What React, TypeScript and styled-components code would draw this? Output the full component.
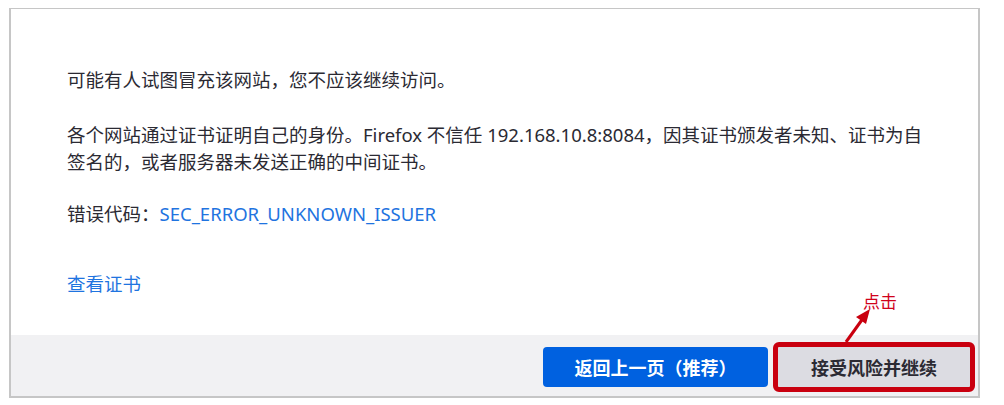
import React from "react";
import styled, { createGlobalStyle } from "styled-components";

const Global = createGlobalStyle`
  html, body { margin: 0; padding: 0; background: #ffffff; }
  body { font-family: "Noto Sans", "Noto Sans CJK SC", sans-serif; }
`;

const Page = styled.div`
  width: 1004px;
  height: 405px;
  padding: 8px 0 0 9px;
  box-sizing: border-box;
`;

const Frame = styled.div`
  width: 971px;
  height: 390px;
  box-sizing: border-box;
  border: 2px solid #c6c6c6;
  border-top-width: 1px;
  display: flex;
  flex-direction: column;
  background: #ffffff;
`;

const Body = styled.div`
  flex: 1;
  padding: 57px 40px 0 56px;
  color: #2b2a33;
  font-size: 18.5px;
  line-height: 27px;
`;

const Para = styled.p<{ $gap: number }>`
  margin: 0 0 ${(p) => p.$gap}px 0;
`;

const Link = styled.a`
  color: #1f74e0;
  text-decoration: none;
`;

const Footer = styled.div`
  height: 61px;
  background: #f1f1f3;
  display: flex;
  justify-content: flex-end;
  align-items: flex-start;
  gap: 10px;
  padding: 12px 8px 0 0;
  box-sizing: border-box;
`;

const Button = styled.button<{ $primary?: boolean }>`
  height: 40px;
  border: none;
  border-radius: 4px;
  font-family: "Noto Sans CJK SC", "Noto Sans", sans-serif;
  font-weight: 700;
  font-size: 18px;
  padding: 0;
  background: ${(p) => (p.$primary ? "#0061e0" : "#dcdce2")};
  color: ${(p) => (p.$primary ? "#ffffff" : "#2b2a33")};
  width: ${(p) => (p.$primary ? "225px" : "192px")};
`;

const Highlight = styled.div`
  position: relative;
  display: flex;
`;

const Accept = styled(Button)`
  outline: 5px solid #c9000f;
  outline-offset: 0;
  border-radius: 1px;
`;

const Note = styled.div`
  position: absolute;
  left: 54px;
  top: -73px;
  width: 90px;
  height: 70px;
  pointer-events: none;
`;

const NoteText = styled.span`
  position: absolute;
  left: 31px;
  top: 14px;
  color: #d0021b;
  font-family: "Noto Sans CJK SC", sans-serif;
  font-size: 17px;
  line-height: 26px;
`;

const Arrow = styled.svg`
  position: absolute;
  left: 0;
  top: 0;
`;

export default function App() {
  return (
    <>
      <Global />
      <Page>
        <Frame>
          <Body>
            <Para $gap={28}>可能有人试图冒充该网站，您不应该继续访问。</Para>
            <Para $gap={25}>
              各个网站通过证书证明自己的身份。Firefox 不信任 192.168.10.8:8084，因其证书颁发者未知、证书为自签名的，或者服务器未发送正确的中间证书。
            </Para>
            <Para $gap={43}>
              错误代码：<Link href="#">SEC_ERROR_UNKNOWN_ISSUER</Link>
            </Para>
            <Para $gap={0}>
              <Link href="#">查看证书</Link>
            </Para>
          </Body>
          <Footer>
            <Button $primary>返回上一页（推荐）</Button>
            <Highlight>
              <Accept>接受风险并继续</Accept>
              <Note>
                <NoteText>点击</NoteText>
                <Arrow width="90" height="70" viewBox="0 0 90 70">
                  <line x1="14" y1="68" x2="32" y2="43" stroke="#c9000f" strokeWidth="3" />
                  <polygon points="38,35 24,43 34,50" fill="#c9000f" />
                </Arrow>
              </Note>
            </Highlight>
          </Footer>
        </Frame>
      </Page>
    </>
  );
}
